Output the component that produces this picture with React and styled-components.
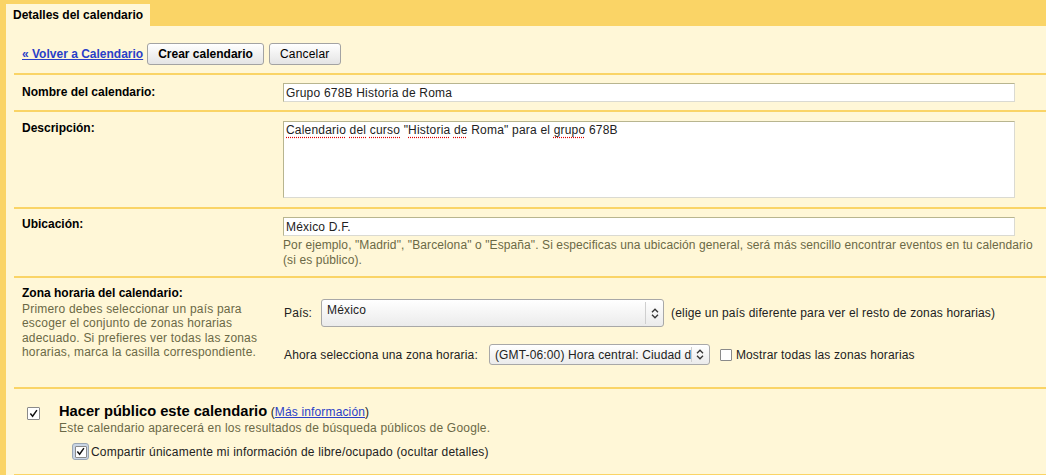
import React from "react";
import styled, { createGlobalStyle, css } from "styled-components";

const GlobalStyle = createGlobalStyle`
  html, body {
    margin: 0;
    padding: 0;
    background: #fad466;
  }
  body {
    font-family: "Liberation Sans", Arial, sans-serif;
    font-size: 12px;
    letter-spacing: 0.15px;
    color: #000;
  }
`;

const TabBar = styled.div`
  height: 26px;
  display: flex;
  align-items: flex-end;
  padding-left: 6px;
`;

const Tab = styled.div`
  height: 22px;
  line-height: 22px;
  padding: 0 7px 0 7px;
  background: #fff7d7;
  font-weight: bold;
  letter-spacing: 0;
`;

const Main = styled.div`
  margin-left: 6px;
  background: #fff7d7;
  padding-left: 8px;
`;

const Toolbar = styled.div`
  display: flex;
  align-items: center;
  padding: 17px 0 8px 8px;
  height: 22px;
`;

const BackLink = styled.a`
  color: #2a3fc8;
  font-weight: bold;
  letter-spacing: 0;
  text-decoration: underline;
  margin-right: 4px;
  cursor: pointer;
`;

const Button = styled.button`
  height: 22px;
  padding: 0 10px;
  margin-right: 5px;
  border: 1px solid #a3a3a3;
  border-radius: 3px;
  background: linear-gradient(#ffffff, #e4e4e4);
  font-family: inherit;
  font-size: 12px;
  letter-spacing: 0.2px;
  color: #000;
  ${(p) =>
    p.primary &&
    css`
      font-weight: bold;
      letter-spacing: 0;
    `}
`;

const Row = styled.div`
  border-top: 2px solid #fad466;
  display: grid;
  grid-template-columns: 261px 1fr;
  padding: ${(p) => p.pad || "8px 0 8px 8px"};
`;

const Label = styled.div`
  font-weight: bold;
  letter-spacing: 0;
  line-height: ${(p) => p.lh || "19px"};
`;

const TextInput = styled.input`
  box-sizing: border-box;
  display: block;
  width: 732px;
  height: 19px;
  margin: 0;
  padding: 0 2px;
  border: 1px solid;
  border-color: #b8b58f #dadad2 #dadad2 #b8b58f;
  background: #fff;
  font-family: inherit;
  font-size: 12px;
  letter-spacing: 0.2px;
  color: #222;
  outline: none;
`;

const TextArea = styled.div`
  box-sizing: border-box;
  width: 732px;
  height: 77px;
  padding: 0 2px;
  border: 1px solid;
  border-color: #b8b58f #dadad2 #dadad2 #b8b58f;
  background: #fff;
  color: #222;
  line-height: 16px;
  letter-spacing: 0.2px;
`;

const Misspelled = styled.span`
  text-decoration: underline dotted #e00000;
  text-underline-offset: 3px;
`;

const Help = styled.div`
  color: #6b6946;
  line-height: ${(p) => p.lh || "15px"};
  margin-top: ${(p) => p.mt || "2px"};
  max-width: ${(p) => p.maxw || "none"};
  letter-spacing: ${(p) => p.ls || "0.2px"};
`;

const ZoneFields = styled.div`
  display: flex;
  flex-direction: column;
  gap: 17px;
  margin: 13px 0 22px 1px;
`;

const FieldLine = styled.div`
  display: flex;
  align-items: center;
  color: #222;
`;

const Select = styled.div`
  box-sizing: border-box;
  display: flex;
  width: ${(p) => p.w}px;
  height: ${(p) => p.h}px;
  margin-left: ${(p) => p.ml}px;
  margin-right: ${(p) => p.mr}px;
  border: 1px solid #a8a8a8;
  border-radius: 3px;
  background: linear-gradient(#ffffff, #ebebeb);
  color: #222;
`;

const SelectValue = styled.div`
  flex: 1;
  overflow: hidden;
  white-space: nowrap;
  padding: ${(p) => p.pt}px 0 0 5px;
  line-height: 14px;
`;

const SelectArrow = styled.div`
  width: 17px;
  margin: 2px 0;
  border-left: 1px solid #cfcfcf;
  display: flex;
  align-items: center;
  justify-content: center;
`;

const Check = styled.span`
  box-sizing: border-box;
  display: inline-flex;
  align-items: center;
  justify-content: center;
  width: ${(p) => p.size || 12}px;
  height: ${(p) => p.size || 12}px;
  border: 1px solid #8a8a8a;
  border-radius: 1px;
  background: #fff;
  margin: ${(p) => p.m || "0"};
`;

const FancyCheck = styled.span`
  box-sizing: border-box;
  display: inline-flex;
  align-items: center;
  justify-content: center;
  width: 17px;
  height: 17px;
  border: 1px solid #9aa6b4;
  border-radius: 3px;
  background: #c9d5e4;
  margin-right: 2px;
`;

const PublicRow = styled.div`
  border-top: 2px solid #fad466;
  display: flex;
  padding: 13px 0 14px 13px;
  border-bottom: 2px solid #fad466;
`;

const PublicBody = styled.div`
  display: flex;
  flex-direction: column;
`;

const PublicTitle = styled.div`
  line-height: 18px;
  color: #222;
`;

const BigBold = styled.span`
  font-size: 14.7px;
  font-weight: bold;
  letter-spacing: 0;
  color: #000;
`;

const InfoLink = styled.a`
  color: #2a3fc8;
  text-decoration: underline;
`;

const ShareLine = styled.div`
  display: flex;
  align-items: center;
  margin: 8px 0 0 13px;
  color: #222;
  letter-spacing: 0.2px;
`;

const Chevrons = () => (
  <svg width="8" height="11" viewBox="0 0 8 11">
    <path d="M1 4.2 L4 1.2 L7 4.2 M1 6.8 L4 9.8 L7 6.8" fill="none" stroke="#333" strokeWidth="1.3" />
  </svg>
);

const Tick = ({ size = 10 }) => (
  <svg width={size} height={size} viewBox="0 0 10 10">
    <path d="M1.5 5 L4 8 L8.8 1.2" fill="none" stroke="#111" strokeWidth="1.6" />
  </svg>
);

const App = () => {
  return (
    <>
      <GlobalStyle />
      <TabBar>
        <Tab>Detalles del calendario</Tab>
      </TabBar>
      <Main>
        <Toolbar>
          <BackLink>« Volver a Calendario</BackLink>
          <Button primary>Crear calendario</Button>
          <Button>Cancelar</Button>
        </Toolbar>

        <Row>
          <Label>Nombre del calendario:</Label>
          <TextInput readOnly defaultValue="Grupo 678B Historia de Roma" />
        </Row>

        <Row pad="9px 0 9px 8px">
          <Label lh="14px">Descripción:</Label>
          <TextArea>
            <Misspelled>Calendario</Misspelled> <Misspelled>del</Misspelled>{" "}
            <Misspelled>curso</Misspelled> "<Misspelled>Historia</Misspelled>{" "}
            <Misspelled>de</Misspelled> Roma" para el <Misspelled>grupo</Misspelled> 678B
          </TextArea>
        </Row>

        <Row>
          <Label lh="15px">Ubicación:</Label>
          <div>
            <TextInput readOnly defaultValue="México D.F." />
            <Help ls="0.1px" maxw="755px">
              Por ejemplo, "Madrid", "Barcelona" o "España". Si especificas una ubicación general, será más
              sencillo encontrar eventos en tu calendario (si es público).
            </Help>
          </div>
        </Row>

        <Row pad="8px 0 0 8px">
          <div>
            <Label lh="14px">Zona horaria del calendario:</Label>
            <Help lh="14.3px" mt="2px" maxw="245px">
              Primero debes seleccionar un país para escoger el conjunto de zonas horarias adecuado. Si
              prefieres ver todas las zonas horarias, marca la casilla correspondiente.
            </Help>
          </div>
          <ZoneFields>
            <FieldLine>
              País:
              <Select w={343} h={28} ml={9} mr={7}>
                <SelectValue pt={3}>México</SelectValue>
                <SelectArrow>
                  <Chevrons />
                </SelectArrow>
              </Select>
              (elige un país diferente para ver el resto de zonas horarias)
            </FieldLine>
            <FieldLine>
              Ahora selecciona una zona horaria:
              <Select w={221} h={21} ml={11} mr={10}>
                <SelectValue pt={3}>(GMT-06:00) Hora central: Ciudad de México</SelectValue>
                <SelectArrow>
                  <Chevrons />
                </SelectArrow>
              </Select>
              <Check m="0 4px 0 0" />
              Mostrar todas las zonas horarias
            </FieldLine>
          </ZoneFields>
        </Row>

        <PublicRow>
          <Check m="5px 19px 0 0" size={13}>
            <Tick size={9} />
          </Check>
          <PublicBody>
            <PublicTitle>
              <BigBold>Hacer público este calendario</BigBold> (<InfoLink>Más información</InfoLink>)
            </PublicTitle>
            <Help lh="14px" mt="0">
              Este calendario aparecerá en los resultados de búsqueda públicos de Google.
            </Help>
            <ShareLine>
              <FancyCheck>
                <Check>
                  <Tick size={9} />
                </Check>
              </FancyCheck>
              Compartir únicamente mi información de libre/ocupado (ocultar detalles)
            </ShareLine>
          </PublicBody>
        </PublicRow>
      </Main>
    </>
  );
};

export default App;
